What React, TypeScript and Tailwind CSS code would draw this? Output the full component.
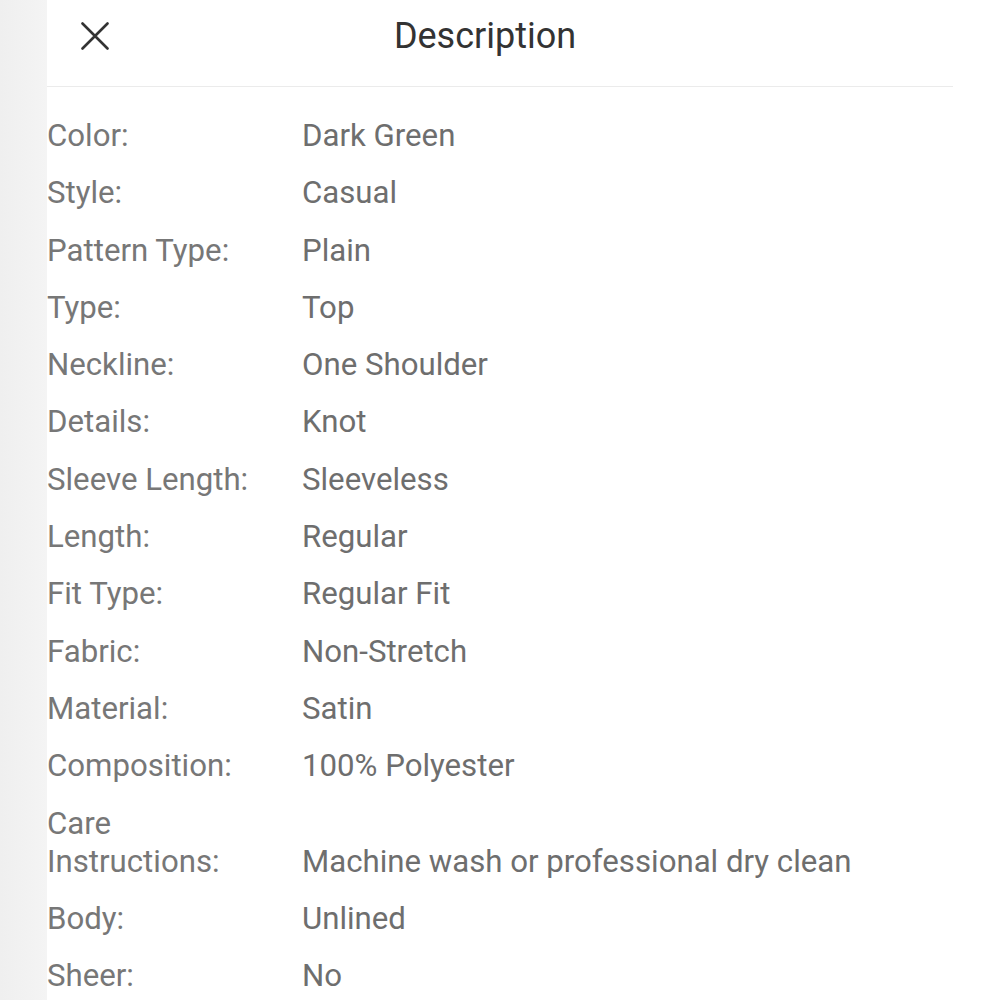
import React from "react";

const rows: { label: string; value: string }[] = [
  { label: "Color:", value: "Dark Green" },
  { label: "Style:", value: "Casual" },
  { label: "Pattern Type:", value: "Plain" },
  { label: "Type:", value: "Top" },
  { label: "Neckline:", value: "One Shoulder" },
  { label: "Details:", value: "Knot" },
  { label: "Sleeve Length:", value: "Sleeveless" },
  { label: "Length:", value: "Regular" },
  { label: "Fit Type:", value: "Regular Fit" },
  { label: "Fabric:", value: "Non-Stretch" },
  { label: "Material:", value: "Satin" },
  { label: "Composition:", value: "100% Polyester" },
  { label: "Care Instructions:", value: "Machine wash or professional dry clean" },
  { label: "Body:", value: "Unlined" },
  { label: "Sheer:", value: "No" },
];

export default function App() {
  return (
    <div
      className="flex w-[1000px] h-[1000px] overflow-hidden bg-white"
      style={{ fontFamily: "Roboto, 'Noto Sans', sans-serif" }}
    >
      <div className="w-[47px] shrink-0 bg-gradient-to-r from-[#efefef] to-[#f4f4f4]" />
      <div className="flex-1 pr-[47px] flex flex-col">
        <div className="relative h-[87px] border-b border-[#ebebeb]">
          <button className="absolute left-[34px] top-[22px] w-[28px] h-[28px]">
            <svg width="28" height="28" viewBox="0 0 28 28">
              <path d="M1.5 1.5 L26.5 26.5 M26.5 1.5 L1.5 26.5" stroke="#333" strokeWidth="2.6" strokeLinecap="round" />
            </svg>
          </button>
          <div className="pt-[15px] pr-[30px] text-center text-[36px] leading-[43px] text-[#333333]">
            Description
          </div>
        </div>
        <div className="pt-[30px] flex flex-col gap-[19.1px] text-[31.2px] leading-[38.2px]">
          {rows.map((r) => (
            <div key={r.label} className="flex items-end">
              <div className="w-[255px] shrink-0 text-[#777777] pr-[20px]">{r.label}</div>
              <div className="flex-1 text-[#6e6e6e]">{r.value}</div>
            </div>
          ))}
        </div>
      </div>
    </div>
  );
}
